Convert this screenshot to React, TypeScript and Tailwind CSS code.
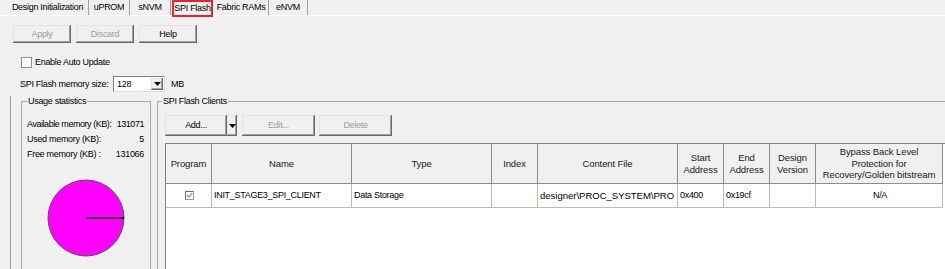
import React from 'react';

const raised =
  'bg-[#f0f0f0] shadow-[inset_-1px_-1px_0_#696969,inset_1px_1px_0_#e3e3e3,inset_-2px_-2px_0_#a0a0a0]';

const Btn: React.FC<{ className: string; disabled?: boolean; children?: React.ReactNode }> = ({ className, disabled, children }) => (
  <div className={`flex items-center justify-center shrink-0 ${raised} ${disabled ? 'text-[#9d9d9d]' : 'text-black'} ${className}`}>
    {children}
  </div>
);

const Arrow = () => (
  <svg width="7" height="4" viewBox="0 0 7 4">
    <path d="M0 0h7L3.5 4z" fill="#000" />
  </svg>
);

const cols = [46, 140, 140, 46, 140, 46, 46, 46, 127];

const headers: React.ReactNode[] = [
  'Program',
  'Name',
  'Type',
  'Index',
  'Content File',
  <>Start<br />Address</>,
  <>End<br />Address</>,
  <>Design<br />Version</>,
  <>Bypass Back Level<br />Protection for<br />Recovery/Golden bitstream</>,
];

export default function App() {
  return (
    <div className="w-[945px] h-[269px] overflow-hidden bg-[#f0f0f0] text-black font-['Liberation_Sans',Arial,sans-serif] text-[9px] leading-[11px] tracking-[-0.3px]">
      {/* tab strip */}
      <div className="flex h-[16px] border-b border-white">
        <div className="w-[89px] border-r border-[#a0a0a0] flex items-center justify-center pl-[7px]">Design Initialization</div>
        <div className="w-[41px] border-r border-[#a0a0a0] flex items-center justify-center">uPROM</div>
        <div className="w-[41px] border-r border-[#a0a0a0] flex items-center justify-center">sNVM</div>
        <div className="w-[43px] h-[17px] self-start px-[1px] flex">
          <div className="flex-1 border-2 border-[#e3262b] flex items-center justify-center">SPI Flash</div>
        </div>
        <div className="w-[55px] border-r border-[#a0a0a0] flex items-center justify-center">Fabric RAMs</div>
        <div className="w-[39px] border-r border-[#a0a0a0] flex items-center justify-center">eNVM</div>
      </div>

      {/* toolbar */}
      <div className="flex gap-[5px] ml-[13px] mt-[9px]">
        <Btn className="w-[58px] h-[18px]" disabled>Apply</Btn>
        <Btn className="w-[58px] h-[18px]" disabled>Discard</Btn>
        <Btn className="w-[58px] h-[18px]">Help</Btn>
      </div>

      <div className="flex items-center h-[12px] mt-[13px] ml-[21px]">
        <div className="w-[11px] h-[11px] border border-[#8e8e8e] bg-white" />
        <span className="ml-[3px]">Enable Auto Update</span>
      </div>

      <div className="flex items-center h-[16px] mt-[8px] ml-[20px]">
        <span className="w-[93px] shrink-0 whitespace-nowrap">SPI Flash memory size:</span>
        <div className="w-[52px] h-[16px] bg-white border border-[#828282] border-r-[#dcdcdc] border-b-[#dcdcdc] flex items-center">
          <span className="flex-1 pl-[3px]">128</span>
          <div className={`w-[12px] h-[12px] mr-[1px] flex items-center justify-center ${raised}`}>
            <Arrow />
          </div>
        </div>
        <span className="ml-[6px]">MB</span>
      </div>

      {/* lower area */}
      <div className="flex mt-[4px] ml-[10px] h-[200px] border-l border-[#a0a0a0] pl-[10px] gap-[6px]">
        <fieldset className="shrink-0 w-[130px] h-[200px] border border-[#a9a9a9] pl-[5px] pr-[6px]">
          <legend className="ml-0 px-[1px]">Usage statistics</legend>
          <div className="mt-[10px] leading-[15px] whitespace-nowrap">
            <div className="flex justify-between tracking-[-0.45px]"><span>Available memory (KB):</span><span>131071</span></div>
            <div className="flex justify-between"><span>Used memory (KB):</span><span>5</span></div>
            <div className="flex justify-between"><span>Free memory (KB) :</span><span>131066</span></div>
          </div>
          <svg className="block mx-auto mt-[17px]" width="78" height="78" viewBox="0 0 78 78">
            <circle cx="39" cy="39" r="38" fill="#ff00ff" stroke="#555" strokeWidth="1" />
            <line x1="39" y1="39" x2="77" y2="39" stroke="#000" strokeWidth="1.3" />
          </svg>
        </fieldset>

        <fieldset className="shrink-0 w-[800px] h-[200px] border border-[#a9a9a9] pl-[7px]">
          <legend className="-ml-[3px] px-[1px]">SPI Flash Clients</legend>
          <div className="flex mt-[8px]">
            <Btn className="w-[62px] h-[21px]">Add...</Btn>
            <Btn className="w-[10px] h-[21px]"><Arrow /></Btn>
            <Btn className="w-[73px] h-[21px] ml-[5px]" disabled>Edit...</Btn>
            <Btn className="w-[73px] h-[21px] ml-[4px]" disabled>Delete</Btn>
          </div>

          <div className="mt-[7px] w-[790px] h-[140px] bg-white border-l border-t border-[#828282]">
            <table className="table-fixed border-separate border-spacing-0 w-[777px]">
              <colgroup>
                {cols.map((w, i) => (
                  <col key={i} style={{ width: w }} />
                ))}
              </colgroup>
              <thead>
                <tr>
                  {headers.map((h, i) => (
                    <th
                      key={i}
                      className="h-[40px] p-0 bg-[#f0f0f0] border-r border-b border-[#8c8c8c] font-normal text-center align-middle text-[9.5px] leading-[11.5px] tracking-[-0.1px] text-[#1a1a1a]"
                    >
                      {h}
                    </th>
                  ))}
                </tr>
              </thead>
              <tbody>
                <tr className="[&>td]:h-[24px] [&>td]:p-0 [&>td]:pl-[2px] [&>td]:border-r [&>td]:border-b [&>td]:border-[#bcbcbc] [&>td]:whitespace-nowrap [&>td]:overflow-hidden [&>td]:align-middle">
                  <td className="text-center">
                    <svg className="inline-block align-middle" width="9" height="9" viewBox="0 0 9 9">
                      <rect x="0.5" y="0.5" width="8" height="8" fill="#fff" stroke="#9a9a9a" />
                      <path d="M0.5 8.5V0.5H8.5" fill="none" stroke="#6e6e6e" />
                      <path d="M2 4.2l1.8 2 3.4-4" fill="none" stroke="#8a8a8a" strokeWidth="1.2" />
                    </svg>
                  </td>
                  <td>INIT_STAGE3_SPI_CLIENT</td>
                  <td>Data Storage</td>
                  <td></td>
                  <td className="text-[9.5px] tracking-normal">{'designer\\PROC_SYSTEM\\PRO'}</td>
                  <td>0x400</td>
                  <td>0x19cf</td>
                  <td></td>
                  <td className="text-center">N/A</td>
                </tr>
              </tbody>
            </table>
          </div>
        </fieldset>
      </div>
    </div>
  );
}
